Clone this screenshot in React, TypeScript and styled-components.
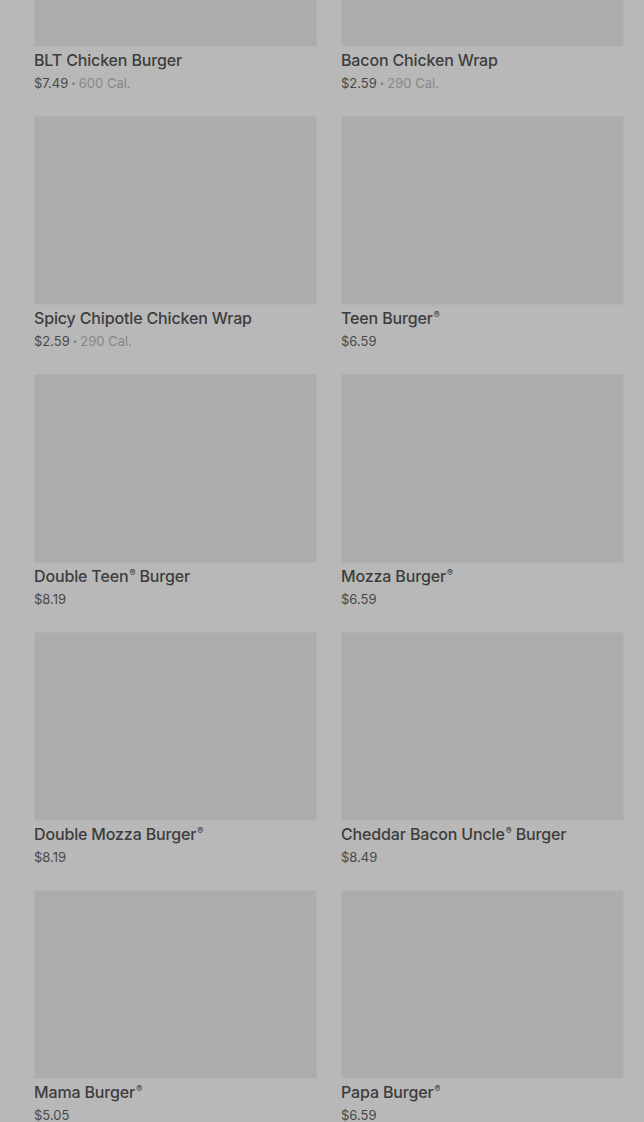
import React, { useLayoutEffect, useRef } from "react"
import styled, { createGlobalStyle } from "styled-components"

const GlobalStyle = createGlobalStyle`
  html, body { margin: 0; padding: 0; background: #b8b8b8; }
  body { font-family: Inter, "Noto Sans", sans-serif; }
`

interface Item {
  name: string
  price: string
  cal?: string
}

const items: Item[] = [
  { name: "BLT Chicken Burger", price: "$7.49", cal: "600 Cal." },
  { name: "Bacon Chicken Wrap", price: "$2.59", cal: "290 Cal." },
  { name: "Spicy Chipotle Chicken Wrap", price: "$2.59", cal: "290 Cal." },
  { name: "Teen Burger®", price: "$6.59" },
  { name: "Double Teen® Burger", price: "$8.19" },
  { name: "Mozza Burger®", price: "$6.59" },
  { name: "Double Mozza Burger®", price: "$8.19" },
  { name: "Cheddar Bacon Uncle® Burger", price: "$8.49" },
  { name: "Mama Burger®", price: "$5.05" },
  { name: "Papa Burger®", price: "$6.59" },
  { name: "Grandpa Burger®", price: "$9.19" },
  { name: "Uncle Burger®", price: "$7.29" },
]

const Viewport = styled.div`
  height: 100vh;
  overflow: hidden;
`

const Grid = styled.div`
  display: grid;
  grid-template-columns: 283px 283px;
  column-gap: 24px;
  row-gap: 24px;
  padding: 24px 20px 40px 34px;
`

const Card = styled.div`
  display: flex;
  flex-direction: column;
`

const Photo = styled.div`
  height: 189px;
  flex: none;
  background: #acacac;
  border: 1px solid #b2b2b2;
  box-sizing: border-box;
  border-radius: 2px;
`

const Name = styled.div`
  margin-top: 2px;
  height: 22px;
  font-size: 16px;
  line-height: 22px;
  font-weight: 500;
  letter-spacing: -0.15px;
  color: #3d3d3d;
  white-space: nowrap;
`

const Reg = styled.span`
  font-size: 9px;
  position: relative;
  top: -6px;
  margin-left: 1px;
`

const Meta = styled.div`
  margin-top: 2px;
  height: 19px;
  font-size: 13px;
  line-height: 20px;
  color: #494949;
  white-space: nowrap;
`

const Dot = styled.span`
  display: inline-block;
  font-size: 8px;
  margin: 0 3px;
  vertical-align: 2px;
  color: #7a7a7a;
`

const Cal = styled.span`
  color: #878787;
`

function renderName(name: string) {
  const parts = name.split("®")
  return parts.map((p, i) => (
    <React.Fragment key={i}>
      {p}
      {i < parts.length - 1 && <Reg>®</Reg>}
    </React.Fragment>
  ))
}

export default function App() {
  const ref = useRef<HTMLDivElement>(null)
  useLayoutEffect(() => {
    if (ref.current) ref.current.scrollTop = 166
  }, [])
  return (
    <>
      <GlobalStyle />
      <Viewport ref={ref}>
        <Grid>
          {items.map((it) => (
            <Card key={it.name}>
              <Photo />
              <Name>{renderName(it.name)}</Name>
              <Meta>
                {it.price}
                {it.cal && (
                  <>
                    <Dot>•</Dot>
                    <Cal>{it.cal}</Cal>
                  </>
                )}
              </Meta>
            </Card>
          ))}
        </Grid>
      </Viewport>
    </>
  )
}
